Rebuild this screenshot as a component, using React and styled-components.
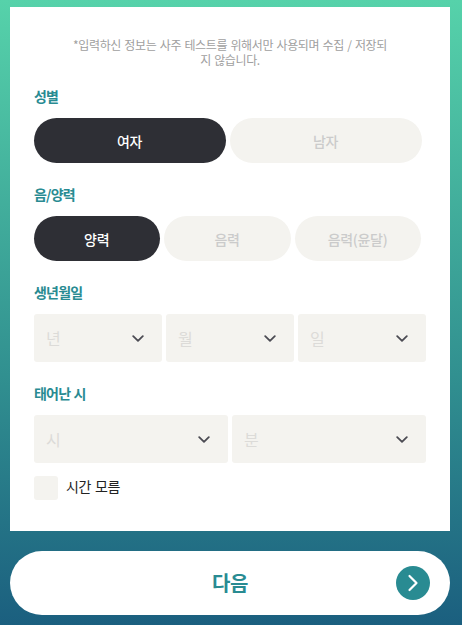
import React, { useState } from 'react';
import styled, { createGlobalStyle } from 'styled-components';

const GlobalStyle = createGlobalStyle`
  * {
    box-sizing: border-box;
  }

  body {
    margin: 0;
    font-family: 'Noto Sans CJK KR', sans-serif;
  }

  button {
    font-family: inherit;
    border: 0;
    cursor: pointer;
  }
`;

const Page = styled.main`
  min-height: 625px;
  padding: 7px 12px 10px 10px;
  background: linear-gradient(180deg, #56d2aa 0%, #319090 60%, #1b5f7f 100%);
`;

const Card = styled.section`
  width: 440px;
  height: 524px;
  padding: 30px 24px 0;
  background-color: #fff;
`;

const Notice = styled.p`
  width: 320px;
  margin: 0 auto;
  color: #a0a0a0;
  font-size: 12px;
  line-height: 15px;
  letter-spacing: -0.36px;
  word-spacing: 1px;
  text-align: center;
  word-break: break-all;
`;

const Field = styled.div`
  margin-top: ${({ $top }) => $top}px;
`;

const Label = styled.h2`
  margin: 0 0 12px;
  color: #298b92;
  font-size: 14px;
  font-weight: 700;
  line-height: 20px;
  letter-spacing: -0.8px;
  word-spacing: 1px;
`;

const Row = styled.div`
  display: flex;
  gap: 4px;
`;

const Pill = styled.button`
  width: ${({ $width }) => $width}px;
  height: 45px;
  padding: 0 1px 0 0;
  border-radius: 23px;
  background-color: ${({ $active }) => ($active ? '#2e2f35' : '#f4f3ef')};
  color: ${({ $active }) => ($active ? '#fff' : '#cbcbcb')};
  font-size: 14px;
  font-weight: 500;
  letter-spacing: -0.3px;
`;

const SelectBox = styled.button`
  display: flex;
  flex: 1;
  align-items: center;
  justify-content: space-between;
  height: 48px;
  padding: 0 18px 0 12px;
  border-radius: 3px;
  background-color: #f4f3ef;
  color: #dcdbd8;
  font-size: 16px;
  font-weight: 400;
`;

const CheckLabel = styled.label`
  display: flex;
  gap: 8px;
  margin-top: 13px;
  color: #222;
  font-size: 14px;
  line-height: 20px;
  letter-spacing: -0.3px;
  word-spacing: 1px;
`;

const Checkbox = styled.input`
  appearance: none;
  width: 24px;
  height: 24px;
  margin: 0;
  border-radius: 3px;
  background-color: #f4f3ef;

  &:checked {
    background-color: #298b92;
  }
`;

const NextButton = styled.button`
  display: grid;
  grid-template-columns: 34px 1fr 34px;
  align-items: center;
  width: 440px;
  height: 64px;
  margin-top: 20px;
  padding: 0 20px;
  border-radius: 32px;
  background-color: #fff;
  color: #298b92;
  font-size: 20px;
  font-weight: 700;
  letter-spacing: -0.5px;
`;

const NextText = styled.span`
  grid-column: 2;
  padding-bottom: 2px;
`;

const genders = ['여자', '남자'];
const calendars = ['양력', '음력', '음력(윤달)'];
const dates = ['년', '월', '일'];
const times = ['시', '분'];

function Select({ children }) {
  return (
    <SelectBox type='button'>
      {children}
      <svg width='12' height='8' viewBox='0 0 12 8' fill='none'>
        <path
          d='M1.2 2.2L6 6.8L10.8 2.2'
          stroke='#4b4b53'
          strokeWidth='1.8'
          strokeLinecap='round'
          strokeLinejoin='round'
        />
      </svg>
    </SelectBox>
  );
}

export default function App() {
  const [gender, setGender] = useState('여자');
  const [calendar, setCalendar] = useState('양력');

  return (
    <Page>
      <GlobalStyle />
      <Card>
        <Notice>
          *입력하신 정보는 사주 테스트를 위해서만 사용되며 수집 / 저장되지 않습니다.
        </Notice>
        <Field $top={19}>
          <Label>성별</Label>
          <Row>
            {genders.map((item) => (
              <Pill
                key={item}
                type='button'
                $width={192}
                $active={item === gender}
                onClick={() => setGender(item)}
              >
                {item}
              </Pill>
            ))}
          </Row>
        </Field>
        <Field $top={21}>
          <Label>음/양력</Label>
          <Row>
            {calendars.map((item) => (
              <Pill
                key={item}
                type='button'
                $width={126.4}
                $active={item === calendar}
                onClick={() => setCalendar(item)}
              >
                {item}
              </Pill>
            ))}
          </Row>
        </Field>
        <Field $top={21}>
          <Label>생년월일</Label>
          <Row>
            {dates.map((item) => (
              <Select key={item}>{item}</Select>
            ))}
          </Row>
        </Field>
        <Field $top={21}>
          <Label>태어난 시</Label>
          <Row>
            {times.map((item) => (
              <Select key={item}>{item}</Select>
            ))}
          </Row>
        </Field>
        <CheckLabel>
          <Checkbox type='checkbox' />
          시간 모름
        </CheckLabel>
      </Card>
      <NextButton type='button'>
        <NextText>다음</NextText>
        <svg width='34' height='34' viewBox='0 0 34 34' fill='none'>
          <circle cx='17' cy='17' r='17' fill='#298b92' />
          <path
            d='M13.5 10L20.5 17L13.5 24'
            stroke='#fff'
            strokeWidth='2.2'
            strokeLinecap='round'
            strokeLinejoin='round'
          />
        </svg>
      </NextButton>
    </Page>
  );
}
